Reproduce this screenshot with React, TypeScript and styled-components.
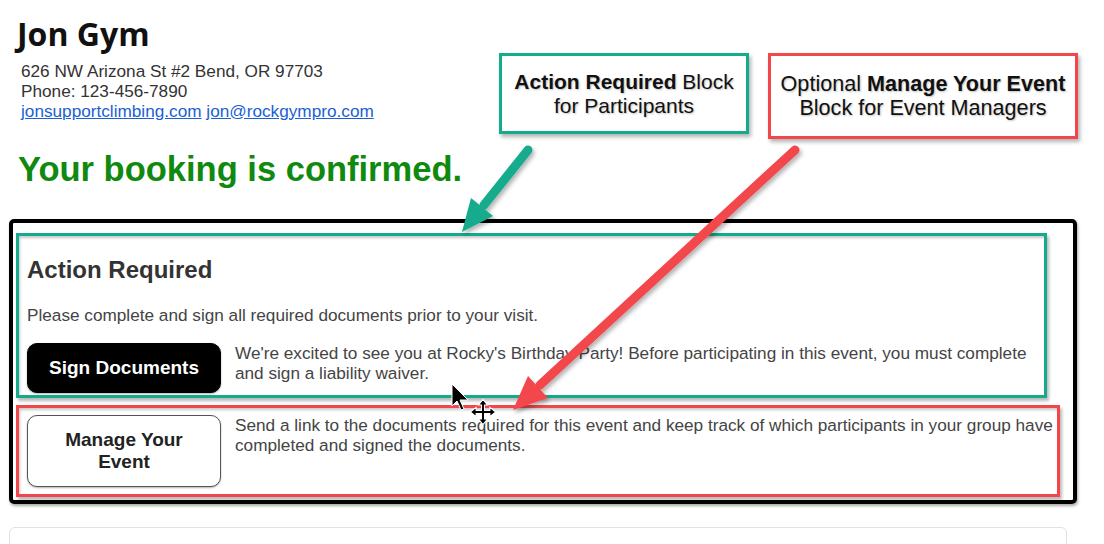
import React from 'react'
import styled, { createGlobalStyle } from 'styled-components'

const GlobalStyle = createGlobalStyle`
  html, body {
    margin: 0;
    padding: 0;
    background: #fff;
  }
  body {
    font-family: 'Liberation Sans', Arial, sans-serif;
    color: #333;
  }
`

const TEAL = '#13ab8c'
const RED = '#f2464b'

const Page = styled.div`
  position: relative;
  width: 1104px;
  height: 544px;
  overflow: hidden;
  padding: 0 0 0 9px;
  box-sizing: border-box;
`

const GymName = styled.h1`
  margin: 14px 0 0 8px;
  font-family: 'Open Sans', sans-serif;
  font-weight: 700;
  font-size: 32px;
  line-height: 40px;
  color: #111;
`

const Address = styled.div`
  margin: 8px 0 0 12px;
  font-size: 17.2px;
  line-height: 19.8px;
  color: #333;
`

const Link = styled.a`
  color: #1a5fd6;
  text-decoration: underline;
`

const Confirmed = styled.h2`
  margin: 28px 0 0 9px;
  font-size: 34.5px;
  line-height: 40px;
  font-weight: 700;
  color: #0f8a0f;
`

const Card = styled.div`
  margin-top: 30px;
  width: 1068px;
  box-sizing: border-box;
  border: 4px solid #000;
  border-radius: 5px;
  padding: 10px 0 3px 3px;
  box-shadow: 1px 2px 3px rgba(0, 0, 0, 0.35);
  display: flex;
  flex-direction: column;
  gap: 7px;
`

const Section = styled.section<{ $color: string; $right: number; $pad: string }>`
  margin-right: ${(p) => p.$right}px;
  border: 3px solid ${(p) => p.$color};
  padding: ${(p) => p.$pad};
  box-shadow: 2px 3px 3px rgba(0, 0, 0, 0.28), inset 2px 3px 3px -1px rgba(0, 0, 0, 0.22);
`

const SectionTitle = styled.h3`
  margin: 20px 0 0;
  font-size: 24px;
  line-height: 28px;
  font-weight: 700;
  color: #333;
`

const Lead = styled.p`
  margin: 21px 0 0;
  font-size: 17.2px;
  line-height: 20px;
  color: #444;
`

const Row = styled.div<{ $top?: number }>`
  display: flex;
  align-items: flex-start;
  gap: 14px;
  margin-top: ${(p) => p.$top ?? 0}px;
`

const Button = styled.button<{ $variant: 'dark' | 'light' }>`
  flex: 0 0 auto;
  width: 194px;
  height: ${(p) => (p.$variant === 'dark' ? 50 : 72)}px;
  border-radius: 10px;
  border: 1px solid ${(p) => (p.$variant === 'dark' ? '#000' : '#555')};
  background: ${(p) => (p.$variant === 'dark' ? '#000' : '#fff')};
  color: ${(p) => (p.$variant === 'dark' ? '#fff' : '#222')};
  font-family: 'Liberation Sans', Arial, sans-serif;
  font-weight: 700;
  font-size: 19px;
  line-height: 22px;
  padding: 0 20px;
  box-shadow: 0 1px 2px rgba(0, 0, 0, 0.3);
`

const Desc = styled.p`
  margin: 0;
  font-size: 17.2px;
  line-height: 20px;
  color: #444;
`

const LowerCard = styled.div`
  margin-top: 23px;
  width: 1058px;
  height: 60px;
  box-sizing: border-box;
  border: 1px solid #e2e2e2;
  border-radius: 6px;
`

const Note = styled.div<{ $color: string; $x: number; $w: number; $h: number; $size: number }>`
  position: absolute;
  left: ${(p) => p.$x}px;
  top: 53px;
  width: ${(p) => p.$w}px;
  height: ${(p) => p.$h}px;
  box-sizing: border-box;
  border: 3px solid ${(p) => p.$color};
  background: #fff;
  box-shadow: 2px 3px 4px rgba(0, 0, 0, 0.3);
  display: flex;
  align-items: center;
  justify-content: center;
  text-align: center;
  font-size: ${(p) => p.$size}px;
  line-height: 24px;
  color: #111;
  text-shadow: 1px 1px 2px rgba(0, 0, 0, 0.25);
`

const Overlay = styled.svg`
  position: absolute;
  left: 0;
  top: 0;
  pointer-events: none;
`

const Arrows = () => (
  <Overlay width={1104} height={544} viewBox="0 0 1104 544">
    <defs>
      <filter id="sh" x="-20%" y="-20%" width="140%" height="140%">
        <feDropShadow dx="2" dy="3" stdDeviation="2" floodColor="#000" floodOpacity="0.3" />
      </filter>
    </defs>
    <g filter="url(#sh)">
      <line x1={528} y1={150} x2={484} y2={205} stroke={TEAL} strokeWidth={9} strokeLinecap="round" />
      <polygon points="462,232 493,216 471,198" fill={TEAL} />
    </g>
    <g filter="url(#sh)">
      <line x1={795} y1={150} x2={540} y2={385} stroke={RED} strokeWidth={9} strokeLinecap="round" />
      <polygon points="513,410 548,398 528,376" fill={RED} />
    </g>
    {/* mouse pointer */}
    <path
      d="M452 384 L452 406 L457 401 L461 410 L464 409 L460 400 L468 400 Z"
      fill="#000"
      stroke="#fff"
      strokeWidth={1}
    />
    {/* move cursor */}
    <g transform="translate(483 412) scale(1.15)" fill="#000" stroke="#fff" strokeWidth={0.9}>
      <path d="M0 -11 L4 -6 L1.3 -6 L1.3 -1.3 L6 -1.3 L6 -4 L11 0 L6 4 L6 1.3 L1.3 1.3 L1.3 6 L4 6 L0 11 L-4 6 L-1.3 6 L-1.3 1.3 L-6 1.3 L-6 4 L-11 0 L-6 -4 L-6 -1.3 L-1.3 -1.3 L-1.3 -6 L-4 -6 Z" />
    </g>
  </Overlay>
)

export default function App() {
  return (
    <>
      <GlobalStyle />
      <Page>
        <GymName>Jon Gym</GymName>
        <Address>
          626 NW Arizona St #2 Bend, OR 97703
          <br />
          Phone: 123-456-7890
          <br />
          <Link href="#">jonsupportclimbing.com</Link> <Link href="#">jon@rockgympro.com</Link>
        </Address>
        <Confirmed>Your booking is confirmed.</Confirmed>

        <Card>
          <Section $color={TEAL} $right={26} $pad="0 8px 2px 8px">
            <SectionTitle>Action Required</SectionTitle>
            <Lead>Please complete and sign all required documents prior to your visit.</Lead>
            <Row $top={18}>
              <Button $variant="dark">Sign Documents</Button>
              <Desc>
                We're excited to see you at Rocky's Birthday Party! Before participating in this event, you must complete
                and sign a liability waiver.
              </Desc>
            </Row>
          </Section>
          <Section $color={RED} $right={13} $pad="7px 2px 7px 8px">
            <Row>
              <Button $variant="light">Manage Your Event</Button>
              <Desc>
                Send a link to the documents required for this event and keep track of which participants in your group have
                completed and signed the documents.
              </Desc>
            </Row>
          </Section>
        </Card>

        <LowerCard />

        <Note $color={TEAL} $x={499} $w={250} $h={81} $size={21}>
          <div>
            <b>Action Required</b> Block
            <br />
            for Participants
          </div>
        </Note>
        <Note $color={RED} $x={768} $w={310} $h={86} $size={21.6}>
          <div>
            Optional <b>Manage Your Event</b>
            <br />
            Block for Event Managers
          </div>
        </Note>
        <Arrows />
      </Page>
    </>
  )
}
